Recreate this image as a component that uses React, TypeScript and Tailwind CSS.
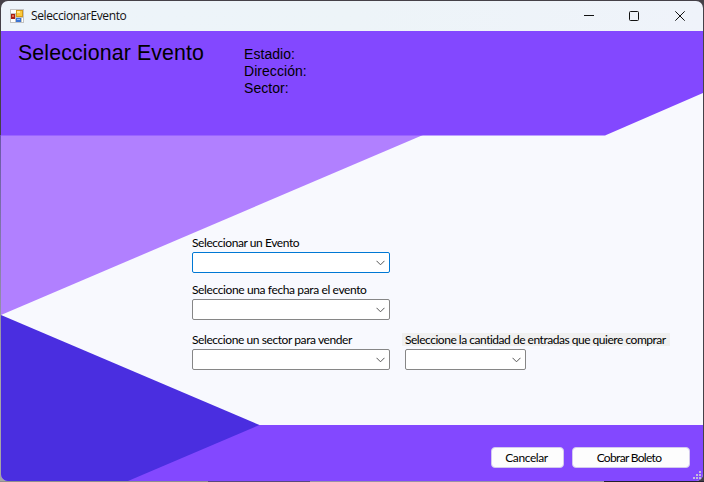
import React from "react";

function FormIcon() {
  return (
    <svg width="14" height="14" viewBox="0 0 14 14" shapeRendering="crispEdges">
      <rect width="14" height="14" fill="#c3c3c3" />
      <rect x="1" y="1" width="5" height="3" fill="#fff" />
      <rect x="1" y="10" width="4" height="3" fill="#fff" />
      <rect x="12" y="9" width="1" height="4" fill="#fff" />
      <rect x="6" y="1" width="7" height="7" fill="#d59a18" />
      <rect x="7" y="2" width="5" height="5" fill="#fcc93c" />
      <rect x="7" y="2" width="3" height="2" fill="#ffe68c" />
      <rect x="1" y="5" width="4" height="5" fill="#a81e14" />
      <rect x="2" y="6" width="2" height="2" fill="#e86a50" />
      <rect x="6" y="9" width="5" height="4" fill="#3b74d4" />
      <rect x="7" y="10" width="3" height="1" fill="#8fbcff" />
    </svg>
  );
}

function TitleBar() {
  return (
    <header className="flex h-[30px] shrink-0 items-center bg-linear-to-r from-[#edf4fa] via-[#edf4f8] to-[#eff3fa] pl-[9px]">
      <FormIcon />
      <span className="ml-[7px] whitespace-nowrap font-['Open_Sans',sans-serif] text-[12px] leading-4 tracking-[-0.39px] text-[#111]">
        SeleccionarEvento
      </span>
      <div className="ml-auto flex items-center pr-[18px] text-[#111]">
        <svg className="mr-[35px]" width="10" height="10" viewBox="0 0 10 10">
          <path d="M0 4.5H10" stroke="currentColor" />
        </svg>
        <svg className="mr-9" width="10" height="10" viewBox="0 0 10 10">
          <rect x="0.5" y="0.5" width="9" height="9" rx="1" fill="none" stroke="currentColor" />
        </svg>
        <svg width="10" height="10" viewBox="0 0 10 10">
          <path d="M0.3 0.3L9.7 9.7M9.7 0.3L0.3 9.7" stroke="currentColor" />
        </svg>
      </div>
    </header>
  );
}

function Backdrop() {
  return (
    <svg className="absolute inset-0" width="702" height="450" viewBox="0 0 702 450">
      <rect width="702" height="450" fill="#f8f9fe" />
      <polygon points="0,104 422,104 0,284" fill="#b180ff" />
      <polygon points="0,0 702,0 702,62 604,104.5 0,104.5" fill="#8348ff" />
      <rect y="394" width="702" height="56" fill="#8348ff" />
      <polygon points="0,284 258.5,394 127,450 0,450" fill="#4a2ee0" />
    </svg>
  );
}

function Combo({ className, focused = false }: { className: string; focused?: boolean }) {
  return (
    <div
      className={`flex h-[21px] items-center justify-end rounded-[2px] border bg-white pr-1 ${
        focused ? "border-[#0078d4]" : "border-[#868686]"
      } ${className}`}
    >
      <svg width="9" height="6" viewBox="0 0 9 6">
        <path d="M0.5 0.8L4.5 4.8L8.5 0.8" fill="none" stroke="#555" />
      </svg>
    </div>
  );
}

function Button({ className, children }: { className: string; children: React.ReactNode }) {
  return (
    <button
      className={`h-[21px] whitespace-nowrap rounded-[4px] border border-[#d3c9ee] bg-[#fdfdfd] text-[12px] leading-[19px] text-black ${className}`}
    >
      {children}
    </button>
  );
}

export default function App() {
  return (
    <div className="flex h-[482px] w-[704px] flex-col overflow-hidden bg-[#454148] pt-px">
      <div className="flex">
        {/* strip of the desktop left of the window */}
        <div className="-mr-px h-[480px] w-2 shrink-0 bg-linear-to-b from-[#454148] from-28% via-[#6b56a8] via-28% to-[#a5a5a5] to-79%" />
        <div className="relative -ml-[6px] flex h-[480px] w-[702px] shrink-0 flex-col overflow-hidden rounded-[7px]">
          <TitleBar />
          <main className="relative h-[450px] font-[Lato,sans-serif] text-[12px] text-black">
            <Backdrop />
            <div className="relative flex h-full flex-col">
              <div className="flex h-[205px] font-['Liberation_Sans',Arial,sans-serif]">
                <h1 className="w-[243px] whitespace-nowrap pl-[17px] pt-[10px] text-[21.33px] leading-6 tracking-[0.13px]">
                  Seleccionar Evento
                </h1>
                <div className="pt-[15px] text-[14px] leading-[17px] tracking-[0.05px]">
                  <p>Estadio:</p>
                  <p>Dirección:</p>
                  <p>Sector:</p>
                </div>
              </div>
              <div className="pl-[191px]">
                <p className="h-4 whitespace-nowrap leading-[14px] tracking-[-0.42px]">Seleccionar un Evento</p>
                <Combo className="w-[198px]" focused />
                <p className="mt-[10px] h-4 whitespace-nowrap leading-[14px] tracking-[-0.38px]">
                  Seleccione una fecha para el evento
                </p>
                <Combo className="w-[198px]" />
                <div className="mt-[13px] flex gap-3">
                  <div>
                    <p className="h-4 whitespace-nowrap leading-[14px] tracking-[-0.42px]">
                      Seleccione un sector para vender
                    </p>
                    <Combo className="w-[198px]" />
                  </div>
                  <div>
                    <p className="mb-[3px] h-[13px] w-[268px] whitespace-nowrap bg-[#f0f0f0] pl-[3px] leading-[14px] tracking-[-0.48px]">
                      Seleccione la cantidad de entradas que quiere comprar
                    </p>
                    <Combo className="ml-[3px] w-[121px]" />
                  </div>
                </div>
              </div>
              <footer className="mb-[13px] mr-[13px] mt-auto flex justify-end gap-2">
                <Button className="w-[73px] pl-0 pr-[2px] tracking-[-0.42px]">Cancelar</Button>
                <Button className="w-[118px] pl-0 pr-1 tracking-[-0.68px]">Cobrar Boleto</Button>
              </footer>
            </div>
            <svg className="absolute bottom-[2px] right-[2px]" width="8" height="8" fill="#c5b9da">
              <path d="M6 0h2v2H6zM3 3h2v2H3zM6 3h2v2H6zM0 6h2v2H0zM3 6h2v2H3zM6 6h2v2H6z" />
            </svg>
          </main>
        </div>
      </div>
      {/* strip of the desktop under the window */}
      <div className="flex h-px shrink-0">
        <div className="w-[208px] bg-[#8f8f8f]" />
        <div className="w-[102px] bg-[#5a4a7c]" />
        <div className="w-[294px] bg-[#9a93a6]" />
        <div className="grow bg-[#24202c]" />
      </div>
    </div>
  );
}
